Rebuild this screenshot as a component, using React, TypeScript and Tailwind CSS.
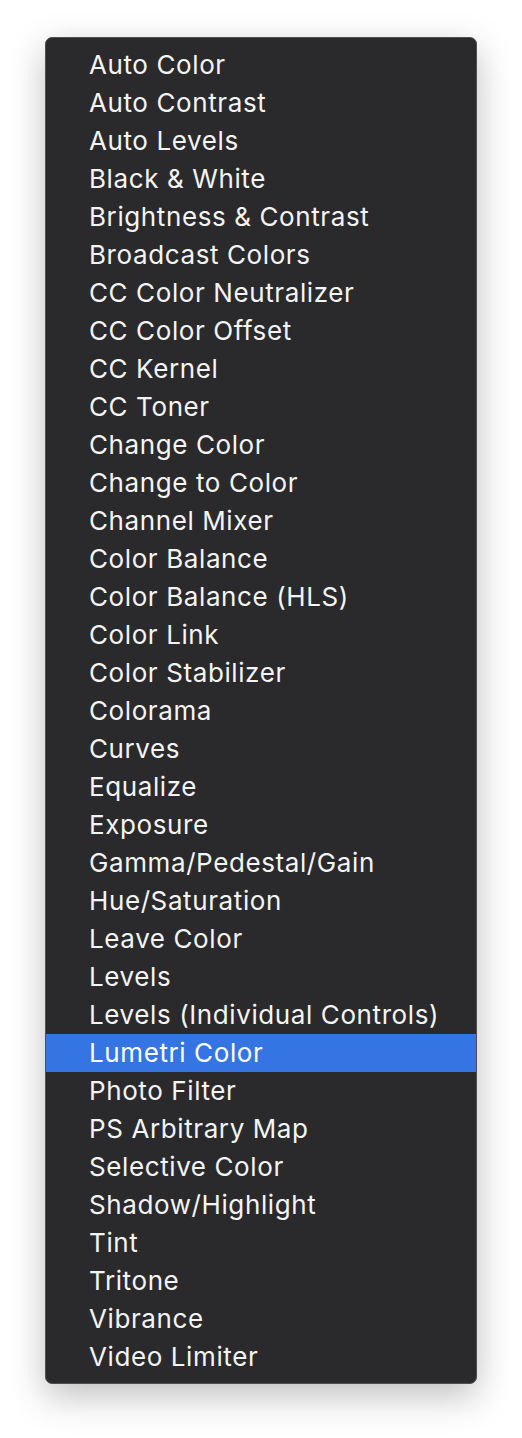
const items = [
  "Auto Color",
  "Auto Contrast",
  "Auto Levels",
  "Black & White",
  "Brightness & Contrast",
  "Broadcast Colors",
  "CC Color Neutralizer",
  "CC Color Offset",
  "CC Kernel",
  "CC Toner",
  "Change Color",
  "Change to Color",
  "Channel Mixer",
  "Color Balance",
  "Color Balance (HLS)",
  "Color Link",
  "Color Stabilizer",
  "Colorama",
  "Curves",
  "Equalize",
  "Exposure",
  "Gamma/Pedestal/Gain",
  "Hue/Saturation",
  "Leave Color",
  "Levels",
  "Levels (Individual Controls)",
  "Lumetri Color",
  "Photo Filter",
  "PS Arbitrary Map",
  "Selective Color",
  "Shadow/Highlight",
  "Tint",
  "Tritone",
  "Vibrance",
  "Video Limiter",
];

const selected = "Lumetri Color";

export default function App() {
  return (
    <div className="min-h-[1438px] w-[522px] bg-white pt-[37px] pl-[45px]">
      <div className="w-[432px] rounded-[7px] border border-[#505053] bg-[#2a2a2d] pt-[8px] pb-[7px] shadow-[0_12px_36px_rgba(0,0,0,0.26)]">
        {items.map((item) => (
          <div
            key={item}
            className={
              item === selected
                ? "h-[38px] flex items-center pl-[43px] bg-[#3574e3] text-white"
                : "h-[38px] flex items-center pl-[43px] text-[#f4f4f4]"
            }
            style={{ fontFamily: "Inter, 'Noto Sans', sans-serif" }}
          >
            <span className="text-[26px] leading-none tracking-[0.6px]">{item}</span>
          </div>
        ))}
      </div>
    </div>
  );
}
